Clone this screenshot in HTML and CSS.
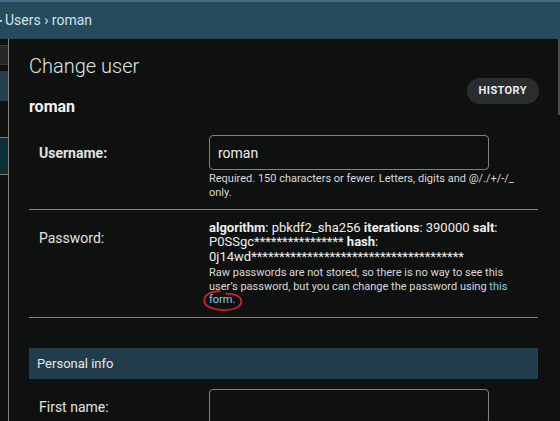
FILE: index.html
```html
<!DOCTYPE html>
<html lang="en">
<head>
<meta charset="utf-8">
<title>Change user</title>
<link rel="stylesheet" href="styles.css">
</head>
<body>
<div class="topbar"></div>
<nav class="breadcrumbs"><span class="crumb-cut"></span>Users › roman</nav>
<div class="layout">
  <aside class="sidebar">
    <div class="side-search"></div>
    <div class="side-caption"></div>
    <div class="side-row"></div>
    <div class="side-row current"></div>
    <div class="side-row"></div>
  </aside>
  <main class="content">
    <h1 class="title">Change user</h1>
    <div class="subhead">
      <h2 class="object-name">roman</h2>
      <a class="history-btn">HISTORY</a>
    </div>
    <section class="module">
      <div class="form-row">
        <label class="label required">Username:</label>
        <div class="field">
          <input class="text-input" type="text" value="roman">
          <div class="help">Required. 150 characters or fewer. Letters, digits and @/./+/-/_<br>only.</div>
        </div>
      </div>
      <div class="form-row">
        <label class="label">Password:</label>
        <div class="field">
          <div class="hash"><strong>algorithm</strong>: pbkdf2_sha256 <strong>iterations</strong>: 390000 <strong>salt</strong>:<br>P0SSgc**************** <strong>hash</strong>:<br>0j14wd**************************************</div>
          <div class="help help-pw">Raw passwords are not stored, so there is no way to see this<br>user’s password, but you can change the password using <a class="link">this</a><br><span class="circled"><a class="link">form.</a><svg class="scribble" width="40" height="22" viewBox="0 0 40 22"><path d="M17 1.2 C 9 1.5, 2 4, 1.2 10 C 0.6 16.5, 11 20.5, 23 20 C 33 19.5, 39 16, 38.2 10.5 C 37.5 6, 31 3.8, 23 3.6" fill="none" stroke="#d81f26" stroke-width="1.7" stroke-linecap="round"/></svg></span></div>
        </div>
      </div>
    </section>
    <section class="module module-gap">
      <h2 class="module-title">Personal info</h2>
      <div class="form-row no-border">
        <label class="label">First name:</label>
        <div class="field">
          <input class="text-input" type="text" value="">
        </div>
      </div>
    </section>
  </main>
</div>
<div class="scroll-thumb"></div>
</body>
</html>
```
FILE: styles.css
```css
html, body {
  margin: 0;
  padding: 0;
}
body {
  background: #0f1110;
  color: #eeeeee;
  font-family: Roboto, "Liberation Sans", sans-serif;
  width: 560px;
  height: 421px;
  overflow: hidden;
}
.topbar {
  height: 2px;
  background: #3e6d87;
}
.breadcrumbs {
  display: flex;
  align-items: center;
  height: 37px;
  background: #264b5d;
  color: #d2e2ea;
  font-size: 14px;
  line-height: 37px;
  white-space: nowrap;
  overflow: hidden;
}
.crumb-cut {
  display: block;
  width: 2px;
  height: 1.5px;
  margin: 1px 3px 0 0;
  background: #b9ccd6;
}
.layout {
  display: flex;
  height: 382px;
}
.sidebar {
  width: 8px;
  flex: none;
  border-right: 1px solid #8a8174;
  padding-top: 6px;
  box-sizing: content-box;
}
.side-search {
  height: 18px;
  background: #262727;
  border-top: 1px solid #3d3d3d;
  border-bottom: 1px solid #3d3d3d;
}
.side-caption {
  margin-top: 6px;
  height: 30px;
  background: #22404e;
}
.side-row {
  height: 36px;
}
.side-row.current {
  height: 36px;
  background: #0b2f35;
  border-top: 1px solid #7f786d;
  border-bottom: 1px solid #7f786d;
}
.content {
  flex: 1;
  padding: 15px 22px 0 20px;
  min-width: 0;
}
.title {
  margin: 0;
  font-size: 20px;
  font-weight: 300;
  line-height: 24px;
  color: #dfe3e6;
}
.subhead {
  display: flex;
  justify-content: space-between;
  align-items: flex-start;
}
.object-name {
  margin: 19px 0 0;
  font-size: 16px;
  font-weight: 700;
  line-height: 20px;
  color: #f2f2f2;
}
.history-btn {
  display: block;
  height: 26px;
  line-height: 26px;
  padding: 0 12px;
  margin-right: -1px;
  border-radius: 13px;
  background: #2a2d2d;
  color: #e8ecef;
  font-size: 11px;
  font-weight: 700;
  letter-spacing: 0.4px;
}
.module {
  margin-top: 8px;
}
.module-gap {
  margin-top: 30px;
}
.module-title {
  margin: 0;
  padding: 8px;
  font-size: 13px;
  font-weight: 400;
  line-height: 15px;
  background: #213d4b;
  color: #e6e6e6;
}
.form-row {
  display: flex;
  padding: 10px 0;
  border-bottom: 1px solid #8a8174;
}
.form-row.no-border {
  border-bottom: none;
}
.label {
  width: 170px;
  flex: none;
  padding: 8px 0 0 10px;
  font-size: 14px;
  line-height: 20px;
  color: #e2e2e2;
}
.label.required {
  font-weight: 700;
}
.field {
  flex: 1;
  min-width: 0;
}
.text-input {
  display: block;
  box-sizing: border-box;
  width: 280px;
  height: 35px;
  margin: 0;
  padding: 0 8px;
  border: 1px solid #8a8174;
  border-radius: 4px;
  background: #0f1110;
  color: #eeeeee;
  font-family: Roboto, "Liberation Sans", sans-serif;
  font-size: 14px;
  outline: none;
}
.help {
  margin-top: 2px;
  font-size: 11px;
  line-height: 13.5px;
  color: #d9d9d9;
  white-space: nowrap;
}
.help-pw {
  margin-top: 2px;
}
.hash {
  padding-top: 0.5px;
  font-size: 13px;
  line-height: 14.5px;
  color: #eeeeee;
  white-space: nowrap;
}
.hash strong {
  font-weight: 700;
}
.link {
  color: #81cdf2;
  text-decoration: none;
}
.circled {
  position: relative;
  display: inline-block;
}
.scribble {
  position: absolute;
  left: -6px;
  top: -3.5px;
  overflow: visible;
}
.scroll-thumb {
  position: absolute;
  right: 0;
  top: 39px;
  width: 2px;
  height: 76px;
  background: #4a4c4c;
}
```
